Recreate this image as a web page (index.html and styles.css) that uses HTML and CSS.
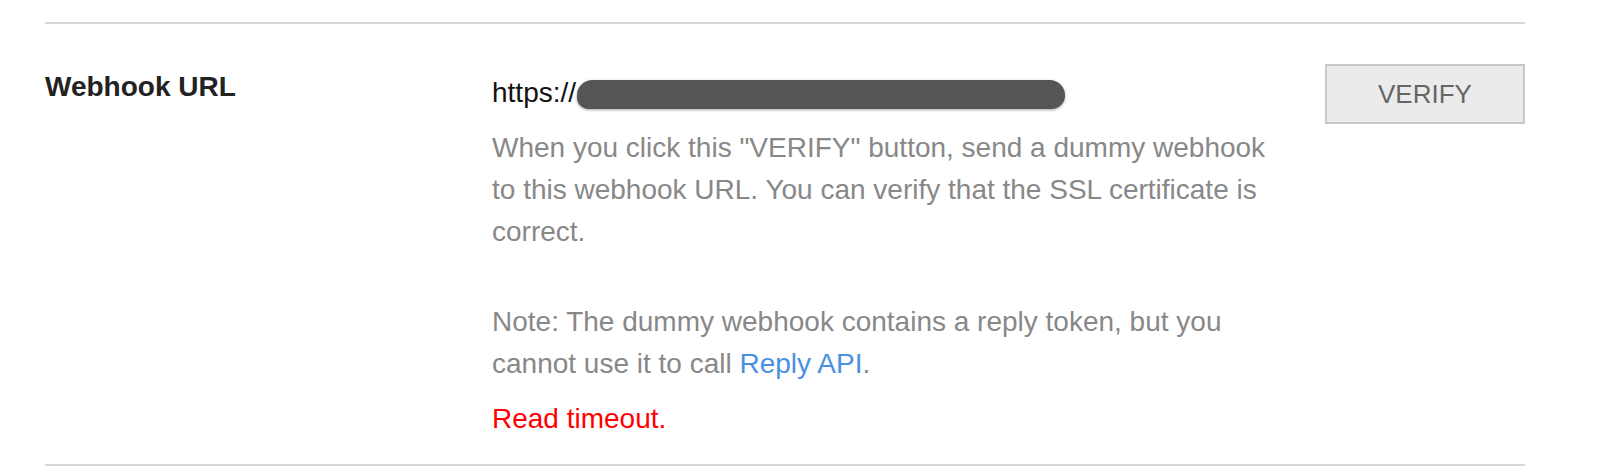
FILE: index.html
```html
<!DOCTYPE html>
<html lang="en">
<head>
    <meta charset="UTF-8">
    <meta name="viewport" content="width=device-width, initial-scale=1.0">
    <title>Webhook settings</title>
    <link rel="stylesheet" href="styles.css">
</head>
<body>
    <div class="settings">
        <div class="row">
            <div class="label">Webhook URL</div>
            <div class="field">
                <div class="url">https://<span class="redacted"></span></div>
                <p class="help">When you click this "VERIFY" button, send a dummy webhook to this webhook URL. You can verify that the SSL certificate is correct.</p>
                <p class="help note">Note: The dummy webhook contains a reply token, but you cannot use it to call <a href="#">Reply API</a>.</p>
                <div class="error">Read timeout.</div>
            </div>
            <div class="actions">
                <button class="btn" type="button">VERIFY</button>
            </div>
        </div>
    </div>
</body>
</html>
```

FILE: styles.css
```css
body {
    margin: 0;
    font-family: 'Liberation Sans', Arial, sans-serif;
    background-color: #fff;
}
.settings {
    width: 1480px;
    margin: 22px 0 0 45px;
    border-top: 2px solid #d6d6d6;
}
.row {
    display: grid;
    grid-template-columns: 447px 1fr 200px;
    padding: 40px 0 24px;
    border-bottom: 2px solid #d6d6d6;
}
.label {
    margin-top: 2px;
    font-size: 28px;
    line-height: 42px;
    font-weight: bold;
    color: #222;
}
.field {
    margin-top: 8px;
    padding-right: 43px;
    font-size: 28px;
    line-height: 42px;
}
.url {
    color: #111;
    margin-bottom: 13px;
    white-space: nowrap;
}
.redacted {
    display: inline-block;
    width: 488px;
    height: 29px;
    margin-left: 1px;
    vertical-align: -7px;
    border-radius: 16px 16px 14px 12px;
    background-color: #555;
    box-shadow: 0 1px 3px rgba(0, 0, 0, 0.35);
}
.help {
    margin: 0;
    color: #888;
}
.help.note {
    margin-top: 48px;
}
.help a {
    color: #4a90e2;
    text-decoration: none;
}
.error {
    margin-top: 13px;
    color: #ff0000;
}
.btn {
    width: 200px;
    height: 60px;
    padding: 0;
    border: 2px solid #c8c8c8;
    background-color: #ebebeb;
    color: #666;
    font-family: 'Liberation Sans', Arial, sans-serif;
    font-size: 26px;
    cursor: pointer;
}
```
